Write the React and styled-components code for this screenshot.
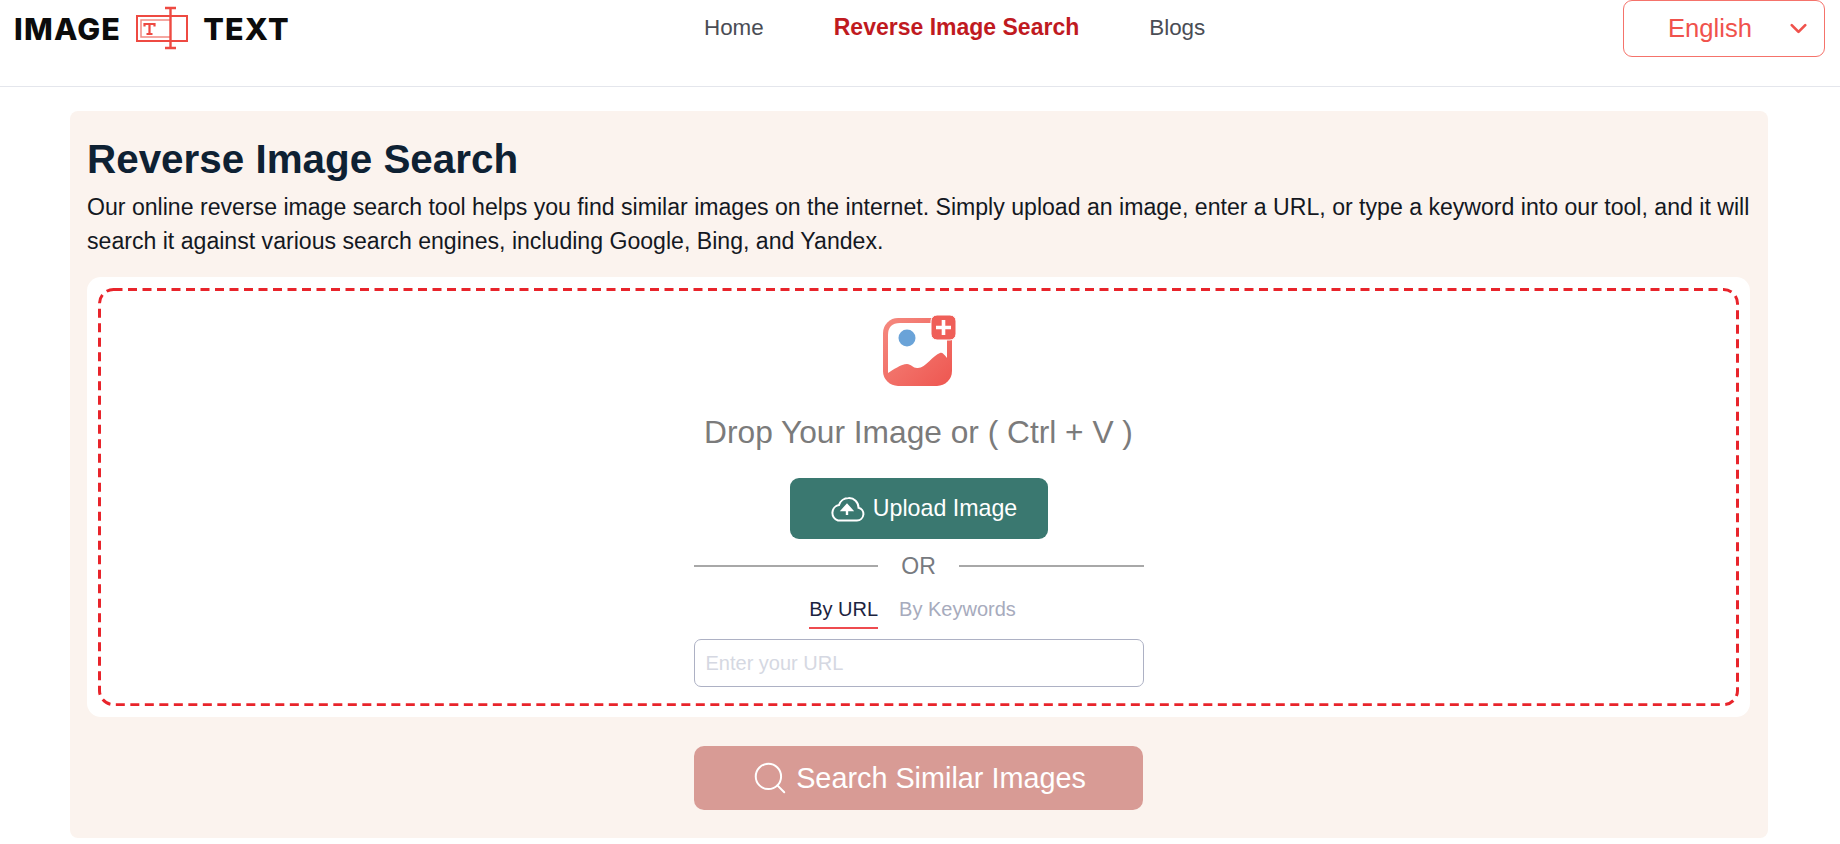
import React from "react";
import styled, { createGlobalStyle } from "styled-components";
import { ChevronDown, Search } from "lucide-react";

const GlobalStyle = createGlobalStyle`
  html, body {
    margin: 0;
    background: #fff;
    font-family: "Liberation Sans", Arial, sans-serif;
  }
  * {
    box-sizing: border-box;
  }
`;

const Header = styled.header`
  height: 87px;
  display: grid;
  grid-template-columns: 690px auto 1fr;
  align-items: start;
  padding: 0 15px 0 14px;
  border-bottom: 1px solid #e4e6ec;
`;
const Logo = styled.div`
  display: flex;
  align-items: center;
  gap: 15px;
  height: 56px;
  font-family: Inter, sans-serif;
  font-weight: 800;
  font-size: 30.5px;
  letter-spacing: 1.2px;
  color: #0c0c0c;
`;
const Nav = styled.nav`
  display: flex;
  gap: 70px;
  height: 55px;
  align-items: center;
`;
const NavLink = styled.a`
  font-size: ${(p) => (p.$active ? "23px" : "22.4px")};
  color: ${(p) => (p.$active ? "#c01a1f" : "#4a4d55")};
  font-weight: ${(p) => (p.$active ? 700 : 400)};
`;
const LangSelect = styled.div`
  justify-self: end;
  width: 202px;
  height: 57px;
  border: 1.5px solid #f5736b;
  border-radius: 9px;
  display: flex;
  align-items: center;
  justify-content: space-between;
  padding: 0 12px 0 44px;
  font-size: 25.6px;
  color: #f0524c;
`;
const Main = styled.main`
  padding: 24px 72px 0 70px;
`;
const Card = styled.section`
  background: #fbf3ee;
  border-radius: 8px;
  padding: 25px 18px 28px 17px;
  display: flex;
  flex-direction: column;
  height: 727px;
`;
const Title = styled.h1`
  margin: 0;
  font-size: 40.4px;
  line-height: 46px;
  font-weight: 700;
  color: #0e2133;
`;
const Intro = styled.p`
  margin: 7.5px 0 0;
  font-size: 23.1px;
  line-height: 34px;
  color: #14181f;
`;
const Panel = styled.div`
  margin-top: 19.5px;
  background: #fff;
  border-radius: 14px;
  padding: 12px;
  height: 441px;
`;
const DropZone = styled.div`
  position: relative;
  height: 100%;
  display: flex;
  flex-direction: column;
  align-items: center;
  padding-top: 26px;
`;
const DashedOutline = styled.svg`
  position: absolute;
  top: -1px;
  left: -1px;
  width: calc(100% + 2px);
  height: calc(100% + 2px);
  pointer-events: none;
`;
const DashedRect = styled.rect`
  x: 1.5px;
  y: 1.5px;
  width: calc(100% - 3px);
  height: calc(100% - 3px);
  rx: 14px;
  fill: none;
  stroke: #e8242b;
  stroke-width: 3px;
  stroke-dasharray: 9 5.5;
`;
const DropText = styled.div`
  margin-top: 27px;
  font-size: 31.7px;
  line-height: 36px;
  color: #7b7b7b;
`;
const UploadButton = styled.button`
  margin-top: 28px;
  width: 258px;
  height: 61px;
  border: 0;
  border-radius: 9px;
  padding: 0 0 0 9px;
  background: #3a7870;
  color: #fff;
  font: 400 23.2px "Liberation Sans", Arial, sans-serif;
  display: flex;
  align-items: center;
  justify-content: center;
  gap: 8px;
`;
const OrRow = styled.div`
  width: 450px;
  margin-top: 10px;
  display: flex;
  align-items: center;
  gap: 23px;
  font-size: 23px;
  line-height: 34px;
  color: #777a80;
  &::before,
  &::after {
    content: "";
    flex: 1;
    height: 2.5px;
    background: #a8a8a8;
  }
`;
const Tabs = styled.div`
  margin-top: 10.5px;
  padding-right: 12px;
  display: flex;
  gap: 21px;
`;
const Tab = styled.div`
  font-size: 20px;
  line-height: 30px;
  height: 35.5px;
  color: ${(p) => (p.$active ? "#1b2340" : "#a7abbd")};
  border-bottom: ${(p) => (p.$active ? "2.5px solid #ee4b4f" : "0")};
`;
const UrlInput = styled.input`
  margin-top: 10px;
  width: 450px;
  height: 48px;
  border: 1.5px solid #adb1c4;
  border-radius: 7px;
  padding: 0 11px;
  font: 400 20px "Liberation Sans", Arial, sans-serif;
  &::placeholder {
    color: #d5d8e2;
    opacity: 1;
  }
`;
const SearchButton = styled.button`
  align-self: center;
  margin-top: 29px;
  width: 449px;
  height: 64px;
  border: 0;
  border-radius: 10px;
  background: #d89b95;
  color: #fff;
  font: 400 28.8px "Liberation Sans", Arial, sans-serif;
  display: flex;
  align-items: center;
  justify-content: center;
  gap: 7px;
`;

const LogoMark = () => (
  <svg width="52" height="44" viewBox="0 0 52 44" fill="none">
    <rect x="1" y="10" width="50" height="25" stroke="#ee4a42" strokeWidth="2" />
    <path d="M34 14H5v17h29" stroke="#f28a83" strokeWidth="1.5" />
    <path d="M34.5 1v41M29 2h11M29 42h11" stroke="#ee4a42" strokeWidth="2.4" />
    <path d="M8.5 20.5V18h10v2.5M13.5 18v10M10.5 28h6" stroke="#ee4a42" strokeWidth="2.2" />
  </svg>
);

const ImagePlusIcon = () => (
  <svg width="76" height="72" viewBox="-2 0 76 72">
    <defs>
      <linearGradient id="imgGrad" x1="0" y1="0" x2="1" y2="1">
        <stop offset="0" stopColor="#f58a80" />
        <stop offset="1" stopColor="#ee5650" />
      </linearGradient>
    </defs>
    <rect x="0" y="3" width="69" height="68" rx="15" fill="url(#imgGrad)" />
    <path
      d="M17 8H52Q64 8 64 20V43C61 39 59 37 57 38C50 40 42 54 34 53C30 53 28 49 24 49C18 49 10 55 5 58V20Q5 8 17 8Z"
      fill="#fff"
    />
    <circle cx="24" cy="23" r="8.5" fill="#6aa3d8" />
    <rect x="48" y="0" width="25" height="25" rx="6" fill="#ef5f58" stroke="#fff" strokeWidth="1" />
    <path d="M60.5 5v15M53 12.5h15" stroke="#fff" strokeWidth="3.6" />
  </svg>
);

const CloudIcon = () => (
  <svg width="36" height="26" viewBox="0 0 36 26" fill="none">
    <path
      d="M9 24.5h19a6.5 6.5 0 0 0 1.5-12.8A9.5 9.5 0 0 0 19.5 2a10 10 0 0 0-9.5 7A8 8 0 0 0 9 24.5z"
      stroke="#fff"
      strokeWidth="2"
    />
    <path d="M18 19v-7M13.5 14l4.5-5 4.5 5z" stroke="#fff" strokeWidth="2.4" fill="#fff" />
  </svg>
);

export default function App() {
  return (
    <>
      <GlobalStyle />
      <Header>
        <Logo>
          IMAGE
          <LogoMark />
          TEXT
        </Logo>
        <Nav>
          <NavLink>Home</NavLink>
          <NavLink $active>Reverse Image Search</NavLink>
          <NavLink>Blogs</NavLink>
        </Nav>
        <LangSelect>
          English
          <ChevronDown size={27} strokeWidth={2.4} />
        </LangSelect>
      </Header>
      <Main>
        <Card>
          <Title>Reverse Image Search</Title>
          <Intro>
            Our online reverse image search tool helps you find similar images on the internet. Simply upload an
            image, enter a URL, or type a keyword into our tool, and it will search it against various search engines,
            including Google, Bing, and Yandex.
          </Intro>
          <Panel>
            <DropZone>
              <DashedOutline>
                <DashedRect />
              </DashedOutline>
              <ImagePlusIcon />
              <DropText>Drop Your Image or ( Ctrl + V )</DropText>
              <UploadButton>
                <CloudIcon />
                Upload Image
              </UploadButton>
              <OrRow>OR</OrRow>
              <Tabs>
                <Tab $active>By URL</Tab>
                <Tab>By Keywords</Tab>
              </Tabs>
              <UrlInput placeholder="Enter your URL" />
            </DropZone>
          </Panel>
          <SearchButton>
            <Search size={38} strokeWidth={1.25} />
            Search Similar Images
          </SearchButton>
        </Card>
      </Main>
    </>
  );
}
